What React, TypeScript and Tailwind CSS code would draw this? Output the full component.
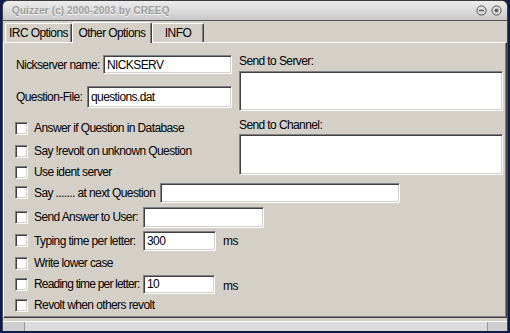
import React from 'react';

const sunken =
  'bg-white border border-t-[#808080] border-l-[#808080] border-b-white border-r-white shadow-[inset_1px_1px_0_#404040,inset_-1px_-1px_0_#d4d0c8]';

function Field({ w, h, value }: { w: string; h: string; value?: string }) {
  return (
    <div className={`${sunken} ${w} ${h} shrink-0 flex items-center pl-[3px] text-black`}>
      {value}
    </div>
  );
}

function Check() {
  return <div className={`${sunken} w-[13px] h-[13px] shrink-0`} />;
}

function CheckRow({ label, className = '' }: { label: string; className?: string }) {
  return (
    <div className={`flex items-center gap-[6px] h-[20px] ${className}`}>
      <Check />
      <span>{label}</span>
    </div>
  );
}

function TitleButtons() {
  return (
    <div className="flex items-center gap-[4px] mr-[5px]">
      <svg width="11" height="11" viewBox="0 0 11 11">
        <circle cx="5.5" cy="5.5" r="4.6" fill="#dcdcdc" stroke="#555" strokeWidth="1" />
        <line x1="3" y1="5.5" x2="8" y2="5.5" stroke="#555" strokeWidth="1.4" />
      </svg>
      <svg width="11" height="11" viewBox="0 0 11 11">
        <circle cx="5.5" cy="5.5" r="4.6" fill="#dcdcdc" stroke="#555" strokeWidth="1" />
        <circle cx="5.5" cy="5.5" r="2" fill="#666" />
      </svg>
    </div>
  );
}

export default function App() {
  const tabBase =
    'flex items-center justify-center border-t border-l border-white border-r border-r-[#404040] shadow-[inset_-1px_0_0_#808080] rounded-t-[2px] bg-[#d4d0c8]';

  return (
    <div className="w-[510px] h-[333px] bg-[#0e1d4e] font-['Liberation_Sans',Arial,sans-serif] text-[12px] tracking-[-0.6px] text-black overflow-hidden">
      <div className="ml-[2px] w-[506px] h-[331px] flex flex-col">
        {/* title bar */}
        <div className="h-[21px] shrink-0 flex items-center justify-between rounded-t-[6px] border border-[#3c3c3c] border-b-[#555] bg-gradient-to-b from-[#ececec] via-[#dcdcdc] to-[#c9c9c9]">
          <span className="ml-[9px] text-[10px] font-bold tracking-[0.1px] text-[#9d9d9d] [text-shadow:0_1px_0_#f4f4f4]">
            Quizzer (c) 2000-2003 by CREEQ
          </span>
          <TitleButtons />
        </div>

        {/* body */}
        <div className="flex-1 flex flex-col bg-[#d4d0c8] border-x border-[#4a4a4a]">
          {/* tabs */}
          <div className="h-[21px] shrink-0 flex items-end pl-[2px]">
            <div className={`${tabBase} w-[67px] h-[19px]`}>IRC Options</div>
            <div className={`${tabBase} w-[80px] h-[21px] -mb-[1px] relative z-10`}>Other Options</div>
            <div className={`${tabBase} w-[52px] h-[19px]`}>INFO</div>
          </div>

          {/* panel */}
          <div className="h-[276px] shrink-0 flex flex-col border border-t-white border-l-white border-r-[#404040] border-b-[#404040] shadow-[inset_-1px_-1px_0_#808080] pl-[11px] pt-[12px]">
            <div className="flex gap-[7px]">
              <div className="w-[217px] flex flex-col">
                <div className="flex items-center h-[19px]">
                  <span className="pl-[1px]">Nickserver name:</span>
                  <div className="ml-auto">
                    <Field w="w-[129px]" h="h-[19px]" value="NICKSERV" />
                  </div>
                </div>
                <div className="flex items-center h-[22px] mt-[12px]">
                  <span className="pl-[1px]">Question-File:</span>
                  <div className="ml-auto">
                    <Field w="w-[145px]" h="h-[22px]" value="questions.dat" />
                  </div>
                </div>
                <CheckRow label="Answer if Question in Database" className="mt-[10px]" />
                <CheckRow label="Say !revolt on unknown Question" className="mt-[3px]" />
                <CheckRow label="Use ident server" className="mt-[1px]" />
              </div>
              <div className="w-[264px] flex flex-col">
                <div className="h-[14px] leading-[14px] -mt-[1px]">Send to Server:</div>
                <div className={`${sunken} h-[40px] mt-[3px]`} />
                <div className="h-[14px] leading-[14px] mt-[7px]">Send to Channel:</div>
                <div className={`${sunken} h-[41px] mt-[2px]`} />
              </div>
            </div>

            <div className="flex items-center h-[21px]">
              <Check />
              <span className="ml-[6px] w-[126px]">Say ....... at next Question</span>
              <Field w="w-[240px]" h="h-[20px]" />
            </div>
            <div className="flex items-center h-[22px] mt-[3px]">
              <Check />
              <span className="ml-[6px] w-[109px]">Send Answer to User:</span>
              <Field w="w-[121px]" h="h-[21px]" />
            </div>
            <div className="flex items-center h-[21px] mt-[2px]">
              <Check />
              <span className="ml-[6px] w-[109px]">Typing time per letter:</span>
              <Field w="w-[73px]" h="h-[20px]" value="300" />
              <span className="ml-[7px]">ms</span>
            </div>
            <CheckRow label="Write lower case" className="mt-[2px]" />
            <div className="flex items-center h-[20px] mt-[1px]">
              <Check />
              <span className="ml-[6px] w-[109px] shrink-0 whitespace-nowrap tracking-[-0.8px]">Reading time per letter:</span>
              <Field w="w-[72px]" h="h-[19px]" value="10" />
              <span className="ml-[8px] mt-[3px]">ms</span>
            </div>
            <CheckRow label="Revolt when others revolt" className="mt-[1px]" />
          </div>

          {/* status bar */}
          <div className="mt-[3px] flex-1 flex border-t border-white bg-[#dcdcdc]">
            <div className="w-[22px] border-r border-[#9a9a9a] bg-[#cfcfcf]" />
            <div className="flex-1 border-r border-[#9a9a9a]" />
            <div className="w-[19px] bg-[#cfcfcf]" />
          </div>
        </div>
      </div>
    </div>
  );
}
